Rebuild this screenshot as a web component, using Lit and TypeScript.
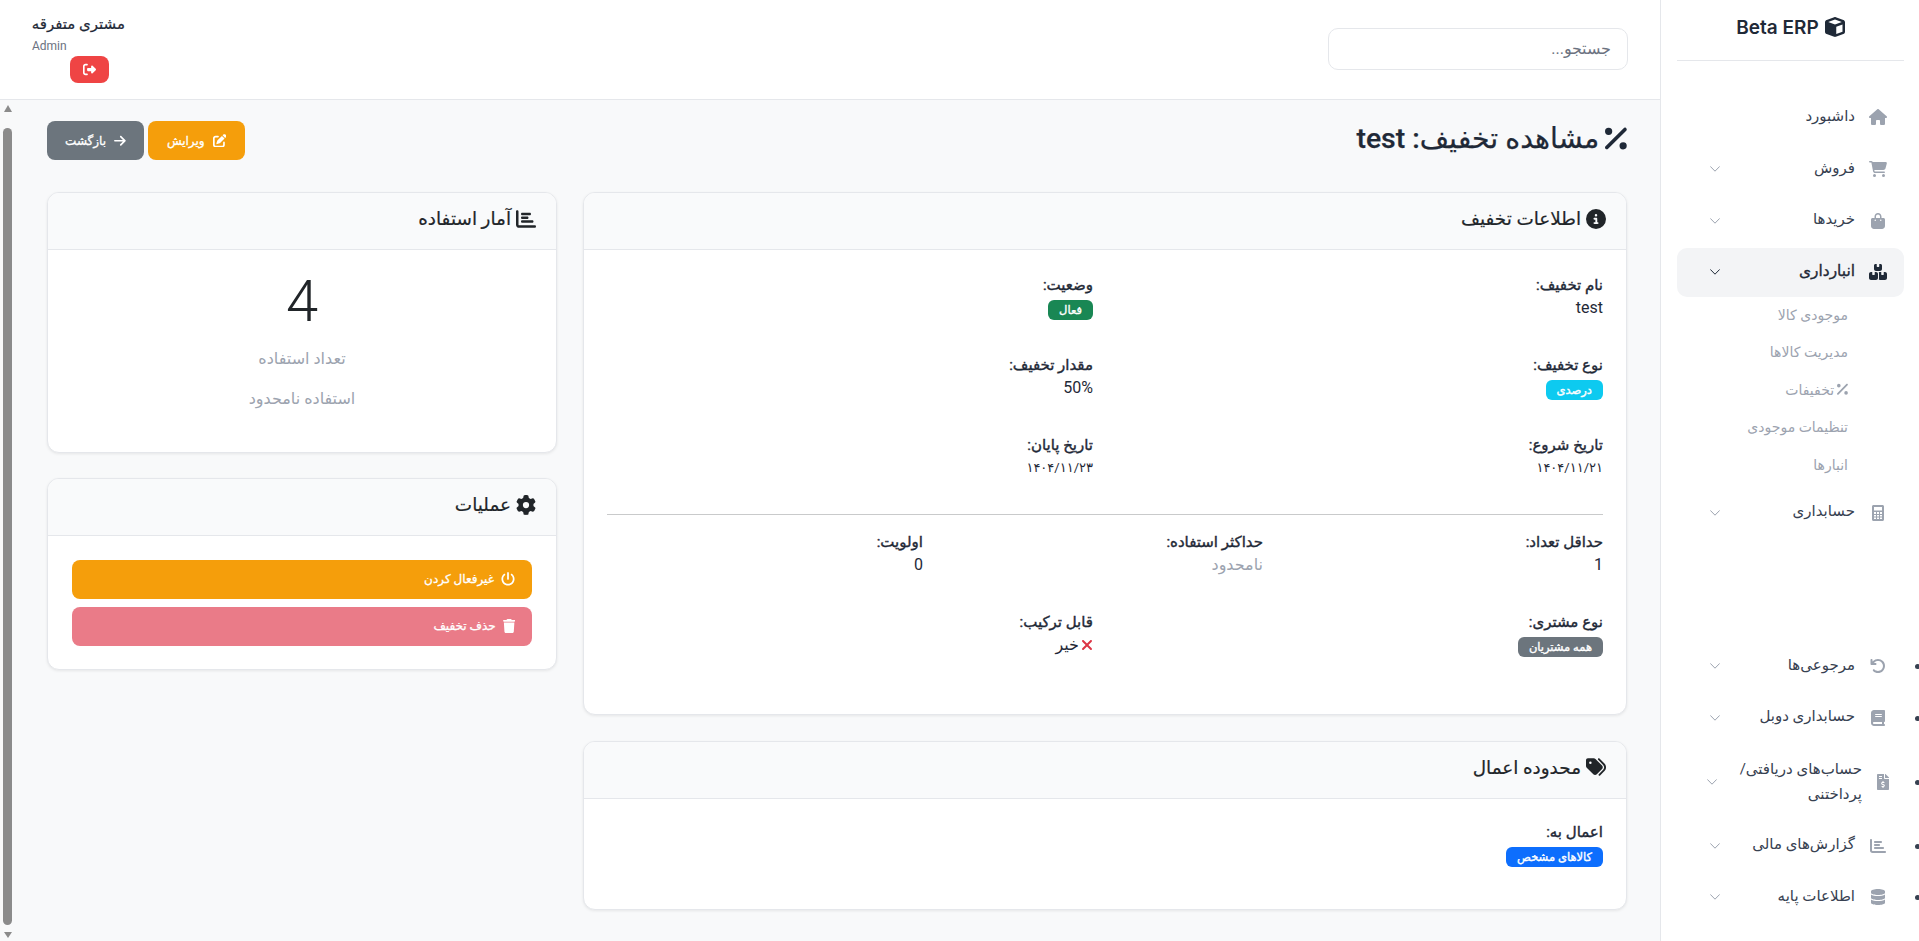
import { LitElement, html, css, svg } from "lit";
import { customElement } from "lit/decorators.js";

const I: Record<string, [number, string]> = {
  house: [576, "M575.8 255.5c0 18-15 32.1-32 32.1h-32l.7 160.2c0 2.7-.2 5.4-.5 8.1V472c0 22.1-17.9 40-40 40H456c-1.1 0-2.2 0-3.3-.1c-1.4 .1-2.8 .1-4.2 .1H416 392c-22.1 0-40-17.9-40-40V448 384c0-17.7-14.3-32-32-32H256c-17.7 0-32 14.3-32 32v64 24c0 22.1-17.9 40-40 40H160 128.1c-1.5 0-3-.1-4.5-.2c-1.2 .1-2.4 .2-3.6 .2H104c-22.1 0-40-17.9-40-40V360c0-.9 0-1.9 .1-2.8V287.6H32c-18 0-32-14-32-32.1c0-9 3-17 10-24L266.4 8c7-7 15-8 22-8s15 2 21 7L564.8 231.5c8 7 12 15 11 24z"],
  cart: [576, "M0 24C0 10.7 10.7 0 24 0H69.5c22 0 41.5 12.8 50.6 32h411c26.3 0 45.5 25 38.6 50.4l-41 152.3c-8.5 31.4-37 53.3-69.5 53.3H170.7l5.4 28.5c2.2 11.3 12.1 19.5 23.6 19.5H488c13.3 0 24 10.7 24 24s-10.7 24-24 24H199.7c-34.6 0-64.3-24.6-70.7-58.5L77.4 54.5c-.7-3.8-4-6.5-7.9-6.5H24C10.7 48 0 37.3 0 24zM128 464a48 48 0 1 1 96 0 48 48 0 1 1 -96 0zm336-48a48 48 0 1 1 0 96 48 48 0 1 1 0-96z"],
  bag: [448, "M160 112c0-35.3 28.7-64 64-64s64 28.7 64 64v48H160V112zm-48 48H48c-26.5 0-48 21.5-48 48V416c0 53 43 96 96 96H352c53 0 96-43 96-96V208c0-26.5-21.5-48-48-48H336V112C336 50.1 285.9 0 224 0S112 50.1 112 112v48zm24 48a24 24 0 1 1 0 48 24 24 0 1 1 0-48zm152 24a24 24 0 1 1 48 0 24 24 0 1 1 -48 0z"],
  boxes: [576, "M248 0H208c-26.5 0-48 21.5-48 48V160c0 35.3 28.7 64 64 64H352c35.3 0 64-28.7 64-64V48c0-26.5-21.5-48-48-48H328V80c0 8.8-7.2 16-16 16H264c-8.8 0-16-7.2-16-16V0zM64 256c-35.3 0-64 28.7-64 64V448c0 35.3 28.7 64 64 64H224c35.3 0 64-28.7 64-64V320c0-35.3-28.7-64-64-64H184v80c0 8.8-7.2 16-16 16H120c-8.8 0-16-7.2-16-16V256H64zM352 512H512c35.3 0 64-28.7 64-64V320c0-35.3-28.7-64-64-64H472v80c0 8.8-7.2 16-16 16H408c-8.8 0-16-7.2-16-16V256H352c-15 0-28.8 5.1-39.7 13.8c4.9 10.4 7.7 22 7.7 34.2V464c0 12.2-2.8 23.8-7.7 34.2C323.2 506.9 337 512 352 512z"],
  calc: [384, "M48 0C21.5 0 0 21.5 0 48V464c0 26.5 21.5 48 48 48H336c26.5 0 48-21.5 48-48V48c0-26.5-21.5-48-48-48H48zM64 64H320V176H64V64zM64 224H128V288H64V224zM160 224H224V288H160V224zM256 224H320V288H256V224zM64 320H128V368H64V320zM160 320H224V368H160V320zM256 320H320V368H256V320zM64 400H128V448H64V400zM160 400H224V448H160V400zM256 400H320V448H256V400z"],
  undo: [512, "M125.7 160H176c17.7 0 32 14.3 32 32s-14.3 32-32 32H48c-17.7 0-32-14.3-32-32V64c0-17.7 14.3-32 32-32s32 14.3 32 32v51.2L97.6 97.6c87.5-87.5 229.3-87.5 316.8 0s87.5 229.3 0 316.8s-229.3 87.5-316.8 0c-12.5-12.5-12.5-32.8 0-45.3s32.8-12.5 45.3 0c62.5 62.5 163.8 62.5 226.3 0s62.5-163.8 0-226.3s-163.8-62.5-226.3 0L125.7 160z"],
  book: [448, "M96 0C43 0 0 43 0 96V416c0 53 43 96 96 96H384h32c17.7 0 32-14.3 32-32s-14.3-32-32-32V384c17.7 0 32-14.3 32-32V32c0-17.7-14.3-32-32-32H384 96zm0 384H352v64H96c-17.7 0-32-14.3-32-32s14.3-32 32-32zm32-240c0-8.8 7.2-16 16-16H336c8.8 0 16 7.2 16 16s-7.2 16-16 16H144c-8.8 0-16-7.2-16-16zm16 48H336c8.8 0 16 7.2 16 16s-7.2 16-16 16H144c-8.8 0-16-7.2-16-16s7.2-16 16-16z"],
  invoice: [384, "M377 105L279.1 7c-4.5-4.5-10.6-7-17-7H256v128h128v-6.1c0-6.3-2.5-12.4-7-16.9zm-153 31V0H24C10.7 0 0 10.7 0 24v464c0 13.3 10.7 24 24 24h336c13.3 0 24-10.7 24-24V160H248c-13.2 0-24-10.8-24-24zM64 72c0-4.42 3.58-8 8-8h80c4.42 0 8 3.58 8 8v16c0 4.42-3.58 8-8 8H72c-4.42 0-8-3.58-8-8V72zm0 80v-16c0-4.42 3.58-8 8-8h80c4.42 0 8 3.58 8 8v16c0 4.42-3.58 8-8 8H72c-4.42 0-8-3.58-8-8zm144 263.88V440c0 4.42-3.58 8-8 8h-16c-4.42 0-8-3.58-8-8v-24.29c-11.29-.58-22.27-4.52-31.37-11.35-3.9-2.93-4.1-8.77-.57-12.14l11.75-11.21c2.77-2.64 6.89-2.76 10.13-.73 3.87 2.42 8.26 3.72 12.82 3.72h28.11c6.5 0 11.8-5.92 11.8-13.19 0-5.95-3.61-11.19-8.77-12.73l-45-13.5c-18.59-5.58-31.58-23.42-31.58-43.39 0-24.52 19.05-44.44 42.67-45.07V232c0-4.42 3.58-8 8-8h16c4.42 0 8 3.58 8 8v24.29c11.29.58 22.27 4.51 31.37 11.35 3.9 2.93 4.1 8.77.57 12.14l-11.75 11.21c-2.77 2.64-6.89 2.76-10.13.73-3.87-2.43-8.26-3.72-12.82-3.72h-28.11c-6.5 0-11.8 5.92-11.8 13.19 0 5.95 3.61 11.19 8.77 12.73l45 13.5c18.59 5.58 31.58 23.42 31.58 43.39 0 24.53-19.05 44.44-42.67 45.07z"],
  chart: [512, "M32 32c17.7 0 32 14.3 32 32V400c0 8.8 7.2 16 16 16H480c17.7 0 32 14.3 32 32s-14.3 32-32 32H80c-44.2 0-80-35.8-80-80V64C0 46.3 14.3 32 32 32zm96 96c0-17.7 14.3-32 32-32l192 0c17.7 0 32 14.3 32 32s-14.3 32-32 32l-192 0c-17.7 0-32-14.3-32-32zm32 64H288c17.7 0 32 14.3 32 32s-14.3 32-32 32H160c-17.7 0-32-14.3-32-32s14.3-32 32-32zm0 96H416c17.7 0 32 14.3 32 32s-14.3 32-32 32H160c-17.7 0-32-14.3-32-32s14.3-32 32-32z"],
  db: [448, "M448 73.143v45.714C448 159.143 347.667 192 224 192S0 159.143 0 118.857V73.143C0 32.857 100.333 0 224 0s224 32.857 224 73.143zM448 176v102.857C448 319.143 347.667 352 224 352S0 319.143 0 278.857V176c48.125 33.143 136.208 48.572 224 48.572S399.874 209.143 448 176zm0 160v102.857C448 479.143 347.667 512 224 512S0 479.143 0 438.857V336c48.125 33.143 136.208 48.572 224 48.572S399.874 369.143 448 336z"],
  percent: [384, "M374.6 118.6c12.5-12.5 12.5-32.8 0-45.3s-32.8-12.5-45.3 0l-320 320c-12.5 12.5-12.5 32.8 0 45.3s32.8 12.5 45.3 0l320-320zM128 128A64 64 0 1 0 0 128a64 64 0 1 0 128 0zM384 384a64 64 0 1 0 -128 0 64 64 0 1 0 128 0z"],
  edit: [512, "M471.6 21.7c-21.9-21.9-57.3-21.9-79.2 0L362.3 51.7l97.9 97.9 30.1-30.1c21.9-21.9 21.9-57.3 0-79.2L471.6 21.7zm-299.2 220c-6.1 6.1-10.8 13.6-13.5 21.9l-29.6 88.8c-2.9 8.6-.6 18.1 5.8 24.6s15.9 8.7 24.6 5.8l88.8-29.6c8.2-2.7 15.7-7.4 21.9-13.5L437.7 172.3 339.7 74.3 172.4 241.7zM96 64C43 64 0 107 0 160V416c0 53 43 96 96 96H352c53 0 96-43 96-96V320c0-17.7-14.3-32-32-32s-32 14.3-32 32v96c0 17.7-14.3 32-32 32H96c-17.7 0-32-14.3-32-32V160c0-17.7 14.3-32 32-32h96c17.7 0 32-14.3 32-32s-14.3-32-32-32H96z"],
  arrow: [448, "M438.6 278.6c12.5-12.5 12.5-32.8 0-45.3l-160-160c-12.5-12.5-32.8-12.5-45.3 0s-12.5 32.8 0 45.3L338.8 224 32 224c-17.7 0-32 14.3-32 32s14.3 32 32 32l306.7 0L233.4 393.4c-12.5 12.5-12.5 32.8 0 45.3s32.8 12.5 45.3 0l160-160z"],
  signout: [512, "M377.9 105.9L500.7 228.7c7.2 7.2 11.3 17.1 11.3 27.3s-4.1 20.1-11.3 27.3L377.9 406.1c-6.4 6.4-15 9.9-24 9.9c-18.7 0-33.9-15.2-33.9-33.9l0-62.1-128 0c-17.7 0-32-14.3-32-32l0-64c0-17.7 14.3-32 32-32l128 0 0-62.1c0-18.7 15.2-33.9 33.9-33.9c9 0 17.6 3.6 24 9.9zM160 96L96 96c-17.7 0-32 14.3-32 32l0 256c0 17.7 14.3 32 32 32l64 0c17.7 0 32 14.3 32 32s-14.3 32-32 32l-64 0c-53 0-96-43-96-96L0 128C0 75 43 32 96 32l64 0c17.7 0 32 14.3 32 32s-14.3 32-32 32z"],
  power: [512, "M288 32c0-17.7-14.3-32-32-32s-32 14.3-32 32V256c0 17.7 14.3 32 32 32s32-14.3 32-32V32zM143.5 120.6c13.6-11.3 15.4-31.5 4.1-45.1s-31.5-15.4-45.1-4.1C49.7 115.4 16 181.8 16 256c0 132.5 107.5 240 240 240s240-107.5 240-240c0-74.2-33.8-140.6-86.6-184.6c-13.6-11.3-33.8-9.4-45.1 4.1s-9.4 33.8 4.1 45.1c38.9 32.3 63.5 81 63.5 135.4c0 97.2-78.8 176-176 176s-176-78.8-176-176c0-54.4 24.7-103.1 63.5-135.4z"],
  trash: [448, "M135.2 17.7L128 32H32C14.3 32 0 46.3 0 64S14.3 96 32 96H416c17.7 0 32-14.3 32-32s-14.3-32-32-32H320l-7.2-14.3C307.4 6.8 296.3 0 284.2 0H163.8c-12.1 0-23.2 6.8-28.6 17.7zM416 128H32L53.2 467c1.6 25.3 22.6 45 47.9 45H346.9c25.3 0 46.3-19.7 47.9-45L416 128z"],
  gear: [512, "M495.9 166.6c3.2 8.7 .5 18.4-6.4 24.6l-43.3 39.4c1.1 8.3 1.7 16.8 1.7 25.4s-.6 17.1-1.7 25.4l43.3 39.4c6.9 6.2 9.6 15.9 6.4 24.6c-4.4 11.9-9.7 23.3-15.8 34.3l-4.7 8.1c-6.6 11-14 21.4-22.1 31.2c-5.9 7.2-15.7 9.6-24.5 6.8l-55.7-17.7c-13.4 10.3-28.2 18.9-44 25.4l-12.5 57.1c-2 9.1-9 16.3-18.2 17.8c-13.8 2.3-28 3.5-42.5 3.5s-28.7-1.2-42.5-3.5c-9.2-1.5-16.2-8.7-18.2-17.8l-12.5-57.1c-15.8-6.5-30.6-15.1-44-25.4L83.1 425.9c-8.8 2.8-18.6 .3-24.5-6.8c-8.1-9.8-15.5-20.2-22.1-31.2l-4.7-8.1c-6.1-11-11.4-22.4-15.8-34.3c-3.2-8.7-.5-18.4 6.4-24.6l43.3-39.4C64.6 273.1 64 264.6 64 256s.6-17.1 1.7-25.4L22.4 191.2c-6.9-6.2-9.6-15.9-6.4-24.6c4.4-11.9 9.7-23.3 15.8-34.3l4.7-8.1c6.6-11 14-21.4 22.1-31.2c5.9-7.2 15.7-9.6 24.5-6.8l55.7 17.7c13.4-10.3 28.2-18.9 44-25.4l12.5-57.1c2-9.1 9-16.3 18.2-17.8C227.3 1.2 241.5 0 256 0s28.7 1.2 42.5 3.5c9.2 1.5 16.2 8.7 18.2 17.8l12.5 57.1c15.8 6.5 30.6 15.1 44 25.4l55.7-17.7c8.8-2.8 18.6-.3 24.5 6.8c8.1 9.8 15.5 20.2 22.1 31.2l4.7 8.1c6.1 11 11.4 22.4 15.8 34.3zM256 336a80 80 0 1 0 0-160 80 80 0 1 0 0 160z"],
  info: [512, "M256 512A256 256 0 1 0 256 0a256 256 0 1 0 0 512zM216 336h24V272H216c-13.3 0-24-10.7-24-24s10.7-24 24-24h48c13.3 0 24 10.7 24 24v88h8c13.3 0 24 10.7 24 24s-10.7 24-24 24H216c-13.3 0-24-10.7-24-24s10.7-24 24-24zm40-208a32 32 0 1 1 0 64 32 32 0 1 1 0-64z"],
  tags: [512, "M345 39.1L472.8 168.4c52.4 53 52.4 138.2 0 191.2L360.8 472.9c-9.3 9.4-24.5 9.5-33.9 .2s-9.5-24.5-.2-33.9L438.6 325.9c33.9-34.3 33.9-89.4 0-123.7L310.9 72.9c-9.3-9.4-9.2-24.6 .2-33.9s24.6-9.2 33.9 .2zM0 229.5V80C0 53.5 21.5 32 48 32H197.5c17 0 33.3 6.7 45.3 18.7l168 168c25 25 25 65.5 0 90.5L277.3 442.7c-25 25-65.5 25-90.5 0l-168-168C6.7 262.7 0 246.5 0 229.5zM144 144a32 32 0 1 0 -64 0 32 32 0 1 0 64 0z"],
  cube: [512, "M234.5 5.7c13.9-5 29.1-5 43.1 0l192 68.6C495 83.4 512 107.5 512 134.6V377.4c0 27-17 51.2-42.5 60.3l-192 68.6c-13.9 5-29.1 5-43.1 0l-192-68.6C17 428.6 0 404.5 0 377.4V134.6c0-27 17-51.2 42.5-60.3l192-68.6zM256 66L82.3 128 256 190l173.7-62L256 66zm32 368.6l160-57.1v-188L288 246.6v188z"],
  x: [384, "M342.6 150.6c12.5-12.5 12.5-32.8 0-45.3s-32.8-12.5-45.3 0L192 210.7 86.6 105.4c-12.5-12.5-32.8-12.5-45.3 0s-12.5 32.8 0 45.3L146.7 256 41.4 361.4c-12.5 12.5-12.5 32.8 0 45.3s32.8 12.5 45.3 0L192 301.3 297.4 406.6c12.5 12.5 32.8 12.5 45.3 0s12.5-32.8 0-45.3L237.3 256 342.6 150.6z"],
};

const ic = (n: string, cls = "") => {
  const [w, d] = I[n];
  return html`<svg class="ic ${cls}" viewBox="0 0 ${w} 512" fill="currentColor">${svg`<path fill-rule="evenodd" d="${d}"></path>`}</svg>`;
};
const chev = html`<svg class="chev" viewBox="0 0 10 6" fill="none" stroke="currentColor" stroke-width="1" stroke-linecap="round" stroke-linejoin="round"><path d="M.6.7 5 5.2 9.4.7"></path></svg>`;

const navTop: [string, string, boolean][] = [
  ["house", "داشبورد", false],
  ["cart", "فروش", true],
  ["bag", "خریدها", true],
];
const subs = ["موجودی کالا", "مدیریت کالاها", "تخفیفات", "تنظیمات موجودی", "انبارها"];
const navBottom: [string, string][] = [
  ["undo", "مرجوعی‌ها"],
  ["book", "حسابداری دوبل"],
  ["invoice", "حساب‌های دریافتی/ پرداختنی"],
  ["chart", "گزارش‌های مالی"],
  ["db", "اطلاعات پایه"],
];

@customElement("app-root")
export class AppRoot extends LitElement {
  static styles = css`
    :host { display: block; width: 100%; height: 941px; overflow: hidden; font-family: Roboto, "Noto Sans", "DejaVu Sans", sans-serif; color: #1f2937; font-size: 14px; }
    * { box-sizing: border-box; }
    .ic { display: block; height: 14px; width: auto; flex: none; }
    .shell { display: flex; height: 100%; background: #f8f9fa; }

    .side { width: 259px; flex: none; background: #fff; border-left: 1px solid #e5e7eb; padding: 0 15px 0 16px; }
    .brand { height: 61px; border-bottom: 1px solid #e5e7eb; display: flex; justify-content: center; align-items: flex-start; gap: 6px; padding-top: 16px; font: 600 19px/23px Inter, sans-serif; color: #1f2937; }
    .brand .ic { height: 20px; margin-top: 1px; }
    .nav { list-style: none; margin: 32px 0 0; padding: 0; }
    .item { display: flex; align-items: center; padding: 12px 16px 12px 33px; line-height: 22.5px; margin-bottom: 3.2px; border-radius: 10px; color: #374151; position: relative; font-size: 15px; }
    .item .slot { width: 20px; flex: none; display: flex; justify-content: center; margin-left: 13px; color: #9ca3af; }
    .item .slot .ic { height: 16px; max-width: 20px; }
    .item .label { flex: 1; margin-bottom: 2px; }
    .chev { width: 10px; height: 6px; flex: none; color: #9ca3af; }
    .item.active { background: #f3f4f6; color: #1f2937; font-size: 15.4px; -webkit-text-stroke: .35px currentColor; }
    .item.active .slot, .item.active .chev { color: #1f2937; }
    .subs { list-style: none; margin: -4px 0 5px; padding: 0; }
    .subs li { height: 37.5px; display: flex; align-items: center; padding-right: 56px; font-size: 14px; color: #9ca3af; gap: 3px; }
    .subs .ic { height: 14.5px; }
    .lower { margin-top: 105px; }
    .lower .item::before { content: ""; position: absolute; right: -16px; top: 50%; width: 5px; height: 5px; margin-top: -2px; border-radius: 50%; background: #374151; }
    .lower .item.wrap { padding: 12px 11px 12px 30px; line-height: 24.5px; }
    .lower .item.wrap .label { margin-bottom: 0; }
    .lower .item.wrap .slot { margin-left: 11px; }

    .main { flex: 1; min-width: 0; display: flex; flex-direction: column; }
    .top { height: 100px; flex: none; background: #fff; border-bottom: 1px solid #e5e7eb; display: flex; justify-content: space-between; align-items: flex-start; padding: 0 32px; }
    .search { width: 300px; height: 42px; margin-top: 28px; border: 1px solid #e5e7eb; border-radius: 10px; background: #fff; padding: 0 16px 2px; font: 16px Roboto, "Noto Sans", sans-serif; outline: none; }
    .search::placeholder { color: #6b7280; }
    .user { width: 93px; display: flex; flex-direction: column; align-items: flex-start; padding-top: 12px; }
    .uname { font-size: 15px; line-height: 24px; -webkit-text-stroke: .2px currentColor; white-space: nowrap; }
    .urole { align-self: flex-end; font-size: 12px; line-height: 20px; color: #6b7280; }
    .logout { margin: 0 16px 0 0; width: 39px; height: 27px; border-radius: 8px; background: #ef4444; color: #fff; display: flex; align-items: center; justify-content: center; }
    .logout .ic { height: 13px; }

    .body { flex: 1; min-height: 0; display: flex; }
    .content { flex: 1; min-width: 0; padding: 21px 33px 0 32px; }
    .bar { width: 15px; flex: none; display: flex; flex-direction: column; align-items: center; padding: 5px 0 3px; justify-content: space-between; }
    .tri { width: 0; height: 0; border: 4.5px solid transparent; border-top: 0; border-bottom: 7px solid #8b8b8b; }
    .tri.down { border-bottom: 0; border-top: 6px solid #8b8b8b; }
    .thumb { width: 9px; flex: 1; margin: 16px 0 7px; border-radius: 5px; background: #8b8b8b; }

    .head { display: flex; justify-content: space-between; align-items: center; height: 39px; margin-bottom: 32px; }
    h1 { margin: 0; padding-bottom: 4px; font-size: 28.4px; font-weight: 500; line-height: 35px; display: flex; align-items: center; gap: 6px; color: #1f2937; }
    h1 span { -webkit-text-stroke: .25px currentColor; }
    h1 .ic { height: 29px; }
    .actions { display: flex; gap: 4px; }
    .actions .btn { width: 97px; justify-content: center; padding: 0; }
    .btn { height: 39px; border-radius: 8px; color: #fff; display: flex; align-items: center; gap: 8px; padding: 0 17px; font-size: 12px; -webkit-text-stroke: .3px #fff; }
    .btn .ic { height: 13.5px; }
    .warn { background: #f59e0b; }
    .gray { background: #6c757d; }
    .pink { background: #ea7b88; }

    .grid { display: grid; grid-template-columns: 1044px 510px; gap: 26px; }
    .col { display: flex; flex-direction: column; gap: 25px; }
    .col.a { gap: 25.5px; }
    .card { background: #fff; border: 1px solid #e5e7eb; border-radius: 12px; box-shadow: 0 1px 3px rgba(0,0,0,.08); overflow: hidden; }
    .chead { height: 57px; background: #f9fafb; border-bottom: 1px solid #e5e7eb; display: flex; align-items: center; gap: 5px; padding: 0 20px 5px; font-size: 18.4px; color: #212529; }
    .chead span { -webkit-text-stroke: .2px currentColor; }
    .chead .ic { height: 20px; }
    .cbody { padding: 23px 23px 56px; }

    .fields { display: grid; column-gap: 24px; row-gap: 32px; }
    .c2 { grid-template-columns: repeat(2, 1fr); }
    .c3 { grid-template-columns: repeat(3, 1fr); margin-bottom: 32px; }
    .f { height: 48px; }
    .f b { display: block; font-weight: 400; line-height: 24px; font-size: 15px; color: #1f2937; -webkit-text-stroke: .4px currentColor; }
    .v { line-height: 22px; color: #1f2937; display: flex; align-items: center; gap: 2px; font-size: 16px; }
    .v.date { font-size: 13px; }
    .muted { color: #9ca3af; }
    .badge { display: inline-block; margin-top: 3px; height: 20px; line-height: 20px; padding: 0 11px; border-radius: 6px; color: #fff; font-size: 11.5px; -webkit-text-stroke: .35px #fff; }
    .hr { height: 1px; background: #c9cacb; margin: 33px 0 15px; }
    .xic { height: 16px; color: #dc3545; }

    .scope { padding: 21.5px 23px 41px; }
    .stats { padding: 24px 24px 41px; text-align: center; color: #9ca3af; font-size: 16px; }
    .num { font-size: 58px; font-weight: 300; line-height: 54px; color: #212529; margin-bottom: 19px; }
    .stats div.t { line-height: 24px; margin-bottom: 16px; }
    .stats div.t:last-child { margin-bottom: 0; }
    .ops { padding: 24px 24px 23px; display: flex; flex-direction: column; gap: 8px; }
    .ops .ic { height: 14px; }
    .ops .btn { gap: 7px; padding-bottom: 2px; }
  `;

  private field(label: string, value: unknown) {
    return html`<div class="f"><b>${label}</b>${value}</div>`;
  }

  render() {
    return html`<div class="shell" dir="rtl">
      <aside class="side">
        <div class="brand" dir="ltr"><span>Beta ERP</span>${ic("cube")}</div>
        <ul class="nav">
          ${navTop.map(([i, t, c]) => html`<li class="item"><span class="slot">${ic(i)}</span><span class="label">${t}</span>${c ? chev : ""}</li>`)}
          <li class="item active"><span class="slot">${ic("boxes")}</span><span class="label">انبارداری</span>${chev}</li>
          <ul class="subs">
            ${subs.map((s) => html`<li>${s === "تخفیفات" ? ic("percent") : ""}${s}</li>`)}
          </ul>
          <li class="item"><span class="slot">${ic("calc")}</span><span class="label">حسابداری</span>${chev}</li>
        </ul>
        <ul class="nav lower">
          ${navBottom.map(([i, t]) => html`<li class="item ${t.length > 20 ? "wrap" : ""}"><span class="slot">${ic(i)}</span><span class="label">${t}</span>${chev}</li>`)}
        </ul>
      </aside>
      <div class="main">
        <header class="top">
          <input class="search" placeholder="جستجو..." />
          <div class="user">
            <div class="uname">مشتری متفرقه</div>
            <div class="urole">Admin</div>
            <div class="logout">${ic("signout")}</div>
          </div>
        </header>
        <div class="body">
          <div class="content">
            <div class="head">
              <h1>${ic("percent")}<span>مشاهده تخفیف: test</span></h1>
              <div class="actions">
                <div class="btn warn">${ic("edit")}<span>ویرایش</span></div>
                <div class="btn gray">${ic("arrow")}<span>بازگشت</span></div>
              </div>
            </div>
            <div class="grid">
              <div class="col a">
                <section class="card">
                  <div class="chead">${ic("info")}<span>اطلاعات تخفیف</span></div>
                  <div class="cbody">
                    <div class="fields c2">
                      ${this.field("نام تخفیف:", html`<div class="v">test</div>`)}
                      ${this.field("وضعیت:", html`<span class="badge" style="background:#198754">فعال</span>`)}
                      ${this.field("نوع تخفیف:", html`<span class="badge" style="background:#0dcaf0">درصدی</span>`)}
                      ${this.field("مقدار تخفیف:", html`<div class="v">50%</div>`)}
                      ${this.field("تاریخ شروع:", html`<div class="v date">۱۴۰۴/۱۱/۲۱</div>`)}
                      ${this.field("تاریخ پایان:", html`<div class="v date">۱۴۰۴/۱۱/۲۳</div>`)}
                    </div>
                    <div class="hr"></div>
                    <div class="fields c3">
                      ${this.field("حداقل تعداد:", html`<div class="v">1</div>`)}
                      ${this.field("حداکثر استفاده:", html`<div class="v muted">نامحدود</div>`)}
                      ${this.field("اولویت:", html`<div class="v">0</div>`)}
                    </div>
                    <div class="fields c2">
                      ${this.field("نوع مشتری:", html`<span class="badge" style="background:#6c757d">همه مشتریان</span>`)}
                      ${this.field("قابل ترکیب:", html`<div class="v">${ic("x", "xic")}خیر</div>`)}
                    </div>
                  </div>
                </section>
                <section class="card">
                  <div class="chead">${ic("tags")}<span>محدوده اعمال</span></div>
                  <div class="scope">
                    ${this.field("اعمال به:", html`<span class="badge" style="background:#0d6efd">کالاهای مشخص</span>`)}
                  </div>
                </section>
              </div>
              <div class="col">
                <section class="card">
                  <div class="chead">${ic("chart")}<span>آمار استفاده</span></div>
                  <div class="stats">
                    <div class="num">4</div>
                    <div class="t">تعداد استفاده</div>
                    <div class="t">استفاده نامحدود</div>
                  </div>
                </section>
                <section class="card">
                  <div class="chead">${ic("gear")}<span>عملیات</span></div>
                  <div class="ops">
                    <div class="btn warn">${ic("power")}<span>غیرفعال کردن</span></div>
                    <div class="btn pink">${ic("trash")}<span>حذف تخفیف</span></div>
                  </div>
                </section>
              </div>
            </div>
          </div>
          <div class="bar"><span class="tri"></span><div class="thumb"></div><span class="tri down"></span></div>
        </div>
      </div>
    </div>`;
  }
}
